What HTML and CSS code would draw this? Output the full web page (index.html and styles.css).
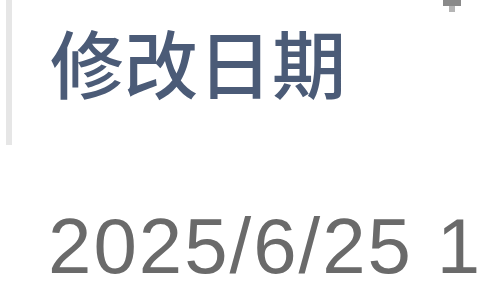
FILE: index.html
```html
<!DOCTYPE html>
<html lang="zh-CN">
<head>
  <meta charset="UTF-8" />
  <title>修改日期</title>
  <link rel="stylesheet" href="styles.css">
</head>
<body>
  <div class="column">
    <div class="column-header">
      <span class="header-label">修改日期</span>
      <span class="sort-mark"></span>
    </div>
    <div class="cell">2025/6/25 1</div>
  </div>
</body>
</html>
```

FILE: styles.css
```css
body {
  margin: 0;
  background-color: #ffffff;
  width: 480px;
  height: 300px;
  overflow: hidden;
}

.column {
  display: flex;
  flex-direction: column;
  width: 480px;
}

.column-header {
  position: relative;
  height: 145px;
  margin-left: 6px;
  border-left: 6px solid #e6e6e6;
  box-sizing: border-box;
}

.header-label {
  display: block;
  padding-left: 38px;
  padding-top: 16px;
  font-family: "Noto Sans CJK SC", sans-serif;
  font-size: 74px;
  font-weight: 500;
  line-height: 90px;
  color: #4b5b77;
  white-space: nowrap;
}

.sort-mark {
  position: absolute;
  top: 0;
  left: 437px;
  width: 6px;
  height: 12px;
  background-color: #b5b5b5;
}

.sort-mark::before {
  content: "";
  position: absolute;
  top: 0;
  left: -6px;
  width: 18px;
  height: 6px;
  background-color: #8a8a8a;
}

.cell {
  padding-left: 48px;
  padding-top: 61px;
  font-family: "Liberation Sans", sans-serif;
  font-size: 78px;
  line-height: 80px;
  letter-spacing: 2px;
  word-spacing: 0;
  color: #6a6a6a;
  white-space: nowrap;
  overflow: hidden;
}
```
